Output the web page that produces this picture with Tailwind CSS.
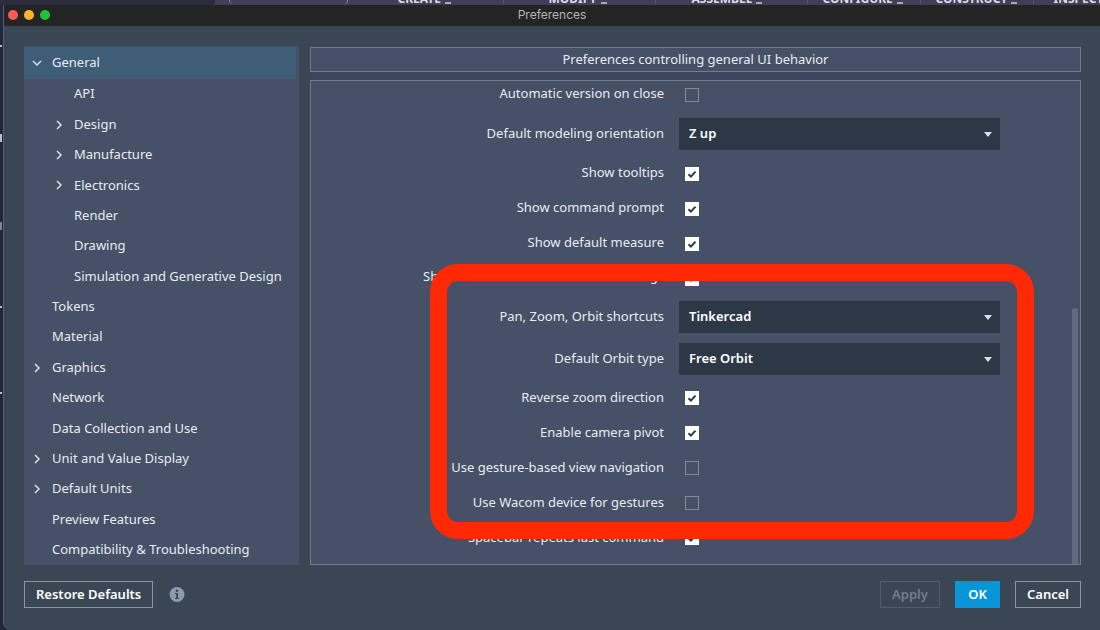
<!DOCTYPE html>
<html lang="en">
<head>
<meta charset="utf-8">
<meta name="viewport" content="width=device-width, initial-scale=1">
<title>Preferences</title>
<script src="https://cdn.jsdelivr.net/npm/@tailwindcss/browser@4"></script>
</head>
<body class="relative flex h-screen flex-col overflow-hidden bg-[#232838] font-['Noto_Sans',sans-serif] text-[13px] text-[#e6ecf5]">

<!-- application toolbar, mostly hidden behind the dialog -->
<div class="flex h-[5px] shrink-0 overflow-hidden bg-[#2d2c3f] text-xs font-bold leading-3 text-[#dcdce6]">
  <div class="w-[19.5%]"></div>
  <div class="relative h-full flex-1 whitespace-nowrap bg-[#433e57]">
    <div class="absolute -top-1 left-[14px] h-2 w-[119px] rounded-lg border-x border-[#8d8ba0]"></div>
    <span class="absolute bottom-0 left-[183px] flex items-end gap-1">CREATE <i class="mb-px h-0.5 w-1.5 bg-[#a9a7b8]"></i></span>
    <span class="absolute bottom-0 left-[334px] flex items-end gap-1">MODIFY <i class="mb-px h-0.5 w-1.5 bg-[#a9a7b8]"></i></span>
    <span class="absolute bottom-0 left-[477px] flex items-end gap-1">ASSEMBLE <i class="mb-px h-0.5 w-1.5 bg-[#a9a7b8]"></i></span>
    <span class="absolute bottom-0 left-[608px] flex items-end gap-1">CONFIGURE <i class="mb-px h-0.5 w-1.5 bg-[#a9a7b8]"></i></span>
    <span class="absolute bottom-0 left-[721px] flex items-end gap-1">CONSTRUCT <i class="mb-px h-0.5 w-1.5 bg-[#a9a7b8]"></i></span>
    <span class="absolute bottom-0 left-[839px] flex items-end gap-1">INSPECT</span>
    <i class="absolute left-[288px] top-0 h-1 w-px bg-[#5b5670]"></i>
    <i class="absolute left-[440px] top-0 h-1 w-px bg-[#5b5670]"></i>
    <i class="absolute left-[592px] top-0 h-1 w-px bg-[#5b5670]"></i>
    <i class="absolute left-[705px] top-0 h-1 w-px bg-[#5b5670]"></i>
    <i class="absolute left-[818px] top-0 h-1 w-px bg-[#5b5670]"></i>
  </div>
</div>
<!-- slivers of the application window left of the dialog -->
<i class="absolute left-0 top-[45px] h-0.5 w-0.5 bg-[#b9bfca]"></i>
<i class="absolute left-0 top-[134px] h-2 w-0.5 bg-[#b9bfca]"></i>
<i class="absolute left-0 top-[222px] h-2 w-0.5 bg-[#7c8496]"></i>
<i class="absolute left-0 top-[306px] h-0.5 w-0.5 bg-[#b9bfca]"></i>
<i class="absolute left-0 top-[392px] h-0.5 w-0.5 bg-[#b9bfca]"></i>

<main class="ml-[3px] flex min-h-0 flex-1 flex-col overflow-hidden rounded-bl-lg border-l border-[#56606e] bg-[#3b4654]">
  <header class="relative flex h-[21px] shrink-0 items-center justify-center bg-[#242424] pb-0.5">
    <div class="absolute left-1 flex gap-[6px]">
      <button aria-label="Close" class="size-[10px] rounded-full bg-[#fc5b57]"></button>
      <button aria-label="Minimize" class="size-[10px] rounded-full bg-[#fdb32b]"></button>
      <button aria-label="Zoom" class="size-[10px] rounded-full bg-[#1fc23c]"></button>
    </div>
    <h1 class="font-[Inter,sans-serif] text-[12px] leading-4 text-[#b4b4b4]">Preferences</h1>
  </header>

  <div class="flex min-h-0 flex-1 gap-[11px] pl-5 pr-[19px] pt-5">
    <nav class="flex w-[275px] shrink-0 flex-col bg-[#465066] pt-px">
      <a href="#" class="mr-[3px] flex h-8 shrink-0 items-center bg-[#3f5d77] pl-[7px]"><svg class="mr-[9px] size-3" viewBox="0 0 12 12" fill="none" stroke="#d5e2ee" stroke-width="1.5"><path d="M2 4l4 4 4-4"/></svg>General</a>
      <a href="#" class="flex flex-1 items-center pl-[50px]">API</a>
      <a href="#" class="flex flex-1 items-center pl-[29px]"><svg class="mr-[9px] size-3" viewBox="0 0 12 12" fill="none" stroke="#d5e2ee" stroke-width="1.5"><path d="M4 2l4 4-4 4"/></svg>Design</a>
      <a href="#" class="flex flex-1 items-center pl-[29px]"><svg class="mr-[9px] size-3" viewBox="0 0 12 12" fill="none" stroke="#d5e2ee" stroke-width="1.5"><path d="M4 2l4 4-4 4"/></svg>Manufacture</a>
      <a href="#" class="flex flex-1 items-center pl-[29px]"><svg class="mr-[9px] size-3" viewBox="0 0 12 12" fill="none" stroke="#d5e2ee" stroke-width="1.5"><path d="M4 2l4 4-4 4"/></svg>Electronics</a>
      <a href="#" class="flex flex-1 items-center pl-[50px]">Render</a>
      <a href="#" class="flex flex-1 items-center pl-[50px]">Drawing</a>
      <a href="#" class="flex flex-1 items-center whitespace-nowrap pl-[50px]">Simulation and Generative Design</a>
      <a href="#" class="flex flex-1 items-center pl-7">Tokens</a>
      <a href="#" class="flex flex-1 items-center pl-7">Material</a>
      <a href="#" class="flex flex-1 items-center pl-[7px]"><svg class="mr-[9px] size-3" viewBox="0 0 12 12" fill="none" stroke="#d5e2ee" stroke-width="1.5"><path d="M4 2l4 4-4 4"/></svg>Graphics</a>
      <a href="#" class="flex flex-1 items-center pl-7">Network</a>
      <a href="#" class="flex flex-1 items-center pl-7">Data Collection and Use</a>
      <a href="#" class="flex flex-1 items-center pl-[7px]"><svg class="mr-[9px] size-3" viewBox="0 0 12 12" fill="none" stroke="#d5e2ee" stroke-width="1.5"><path d="M4 2l4 4-4 4"/></svg>Unit and Value Display</a>
      <a href="#" class="flex flex-1 items-center pl-[7px]"><svg class="mr-[9px] size-3" viewBox="0 0 12 12" fill="none" stroke="#d5e2ee" stroke-width="1.5"><path d="M4 2l4 4-4 4"/></svg>Default Units</a>
      <a href="#" class="flex flex-1 items-center pl-7">Preview Features</a>
      <a href="#" class="flex flex-1 items-center pl-7">Compatibility &amp; Troubleshooting</a>
    </nav>

    <section class="flex min-w-0 flex-1 flex-col gap-2 bg-[#3b465d] pt-px">
      <h2 class="flex h-[25px] shrink-0 items-center justify-center border border-[#707b90] bg-[#465066]">Preferences controlling general UI behavior</h2>

      <form class="relative min-h-0 flex-1 overflow-hidden border border-[#707b90] bg-[#465066]">
        <div class="-mt-1 mr-[80px] flex flex-col">
          <div class="grid h-[35px] grid-cols-[353fr_321fr] items-center gap-x-[15px]">
            <label for="autover" class="pb-0.5 text-right">Automatic version on close</label>
            <span class="ml-[6px] grid size-[14px]"><input id="autover" type="checkbox" class="col-start-1 row-start-1 size-[14px] appearance-none border border-[#7f8a9f] checked:border-white checked:bg-white"></span>
          </div>
          <div class="grid h-11 grid-cols-[353fr_321fr] items-center gap-x-[15px]">
            <label for="orient" class="text-right">Default modeling orientation</label>
            <span class="grid items-center"><select id="orient" class="col-start-1 row-start-1 h-8 w-full appearance-none bg-[#2d3847] px-[10px] font-semibold text-white"><option>Z up</option></select><svg class="pointer-events-none col-start-1 row-start-1 mr-2 h-[5px] w-2 justify-self-end" viewBox="0 0 8 5" fill="#d8e0ea"><path d="M0 0h8L4 5z"/></svg></span>
          </div>
          <div class="grid h-[35px] grid-cols-[353fr_321fr] items-center gap-x-[15px]">
            <label for="tips" class="pb-0.5 text-right">Show tooltips</label>
            <span class="ml-[6px] grid size-[14px]"><input id="tips" type="checkbox" checked class="col-start-1 row-start-1 size-[14px] appearance-none border border-[#7f8a9f] checked:border-white checked:bg-white"><svg class="pointer-events-none col-start-1 row-start-1 size-[14px]" viewBox="0 0 14 14" fill="none" stroke="#2f3a49" stroke-width="2"><path d="M3.5 7.2l2.4 2.4 4.6-5"/></svg></span>
          </div>
          <div class="grid h-[35px] grid-cols-[353fr_321fr] items-center gap-x-[15px]">
            <label for="prompt" class="pb-0.5 text-right">Show command prompt</label>
            <span class="ml-[6px] grid size-[14px]"><input id="prompt" type="checkbox" checked class="col-start-1 row-start-1 size-[14px] appearance-none border border-[#7f8a9f] checked:border-white checked:bg-white"><svg class="pointer-events-none col-start-1 row-start-1 size-[14px]" viewBox="0 0 14 14" fill="none" stroke="#2f3a49" stroke-width="2"><path d="M3.5 7.2l2.4 2.4 4.6-5"/></svg></span>
          </div>
          <div class="grid h-[35px] grid-cols-[353fr_321fr] items-center gap-x-[15px]">
            <label for="measure" class="pb-0.5 text-right">Show default measure</label>
            <span class="ml-[6px] grid size-[14px]"><input id="measure" type="checkbox" checked class="col-start-1 row-start-1 size-[14px] appearance-none border border-[#7f8a9f] checked:border-white checked:bg-white"><svg class="pointer-events-none col-start-1 row-start-1 size-[14px]" viewBox="0 0 14 14" fill="none" stroke="#2f3a49" stroke-width="2"><path d="M3.5 7.2l2.4 2.4 4.6-5"/></svg></span>
          </div>
          <div class="grid h-[35px] grid-cols-[353fr_321fr] items-center gap-x-[15px]">
            <label for="warn" class="pb-1 text-right">Show in-command errors and warnings</label>
            <span class="ml-[6px] grid size-[14px]"><input id="warn" type="checkbox" checked class="col-start-1 row-start-1 size-[14px] appearance-none border border-[#7f8a9f] checked:border-white checked:bg-white"><svg class="pointer-events-none col-start-1 row-start-1 size-[14px]" viewBox="0 0 14 14" fill="none" stroke="#2f3a49" stroke-width="2"><path d="M3.5 6.2l2.4 2.4 4.6-5"/></svg></span>
          </div>
          <div class="grid h-[42px] grid-cols-[353fr_321fr] items-center gap-x-[15px]">
            <label for="pan" class="text-right">Pan, Zoom, Orbit shortcuts</label>
            <span class="grid items-center"><select id="pan" class="col-start-1 row-start-1 h-8 w-full appearance-none bg-[#2d3847] px-[10px] font-semibold text-white"><option>Tinkercad</option></select><svg class="pointer-events-none col-start-1 row-start-1 mr-2 h-[5px] w-2 justify-self-end" viewBox="0 0 8 5" fill="#d8e0ea"><path d="M0 0h8L4 5z"/></svg></span>
          </div>
          <div class="grid h-[42px] grid-cols-[353fr_321fr] items-center gap-x-[15px]">
            <label for="orbit" class="text-right">Default Orbit type</label>
            <span class="grid items-center"><select id="orbit" class="col-start-1 row-start-1 h-8 w-full appearance-none bg-[#2d3847] px-[10px] font-semibold text-white"><option>Free Orbit</option></select><svg class="pointer-events-none col-start-1 row-start-1 mr-2 h-[5px] w-2 justify-self-end" viewBox="0 0 8 5" fill="#d8e0ea"><path d="M0 0h8L4 5z"/></svg></span>
          </div>
          <div class="grid h-[35px] grid-cols-[353fr_321fr] items-center gap-x-[15px]">
            <label for="reverse" class="text-right">Reverse zoom direction</label>
            <span class="ml-[6px] grid size-[14px]"><input id="reverse" type="checkbox" checked class="col-start-1 row-start-1 size-[14px] appearance-none border border-[#7f8a9f] checked:border-white checked:bg-white"><svg class="pointer-events-none col-start-1 row-start-1 size-[14px]" viewBox="0 0 14 14" fill="none" stroke="#2f3a49" stroke-width="2"><path d="M3.5 7.2l2.4 2.4 4.6-5"/></svg></span>
          </div>
          <div class="grid h-[35px] grid-cols-[353fr_321fr] items-center gap-x-[15px]">
            <label for="pivot" class="text-right">Enable camera pivot</label>
            <span class="ml-[6px] grid size-[14px]"><input id="pivot" type="checkbox" checked class="col-start-1 row-start-1 size-[14px] appearance-none border border-[#7f8a9f] checked:border-white checked:bg-white"><svg class="pointer-events-none col-start-1 row-start-1 size-[14px]" viewBox="0 0 14 14" fill="none" stroke="#2f3a49" stroke-width="2"><path d="M3.5 7.2l2.4 2.4 4.6-5"/></svg></span>
          </div>
          <div class="grid h-[35px] grid-cols-[353fr_321fr] items-center gap-x-[15px]">
            <label for="gesture" class="text-right">Use gesture-based view navigation</label>
            <span class="ml-[6px] grid size-[14px]"><input id="gesture" type="checkbox" class="col-start-1 row-start-1 size-[14px] appearance-none border border-[#7f8a9f] checked:border-white checked:bg-white"></span>
          </div>
          <div class="grid h-[35px] grid-cols-[353fr_321fr] items-center gap-x-[15px]">
            <label for="wacom" class="text-right">Use Wacom device for gestures</label>
            <span class="ml-[6px] grid size-[14px]"><input id="wacom" type="checkbox" class="col-start-1 row-start-1 size-[14px] appearance-none border border-[#7f8a9f] checked:border-white checked:bg-white"></span>
          </div>
          <div class="grid h-[35px] grid-cols-[353fr_321fr] items-center gap-x-[15px]">
            <label for="space" class="text-right">Spacebar repeats last command</label>
            <span class="ml-[6px] grid size-[14px]"><input id="space" type="checkbox" checked class="col-start-1 row-start-1 size-[14px] appearance-none border border-[#7f8a9f] checked:border-white checked:bg-white"><svg class="pointer-events-none col-start-1 row-start-1 size-[14px]" viewBox="0 0 14 14" fill="none" stroke="#2f3a49" stroke-width="2"><path d="M3.5 7.2l2.4 2.4 4.6-5"/></svg></span>
          </div>
        </div>
        <!-- scrollbar thumb -->
        <div class="absolute bottom-0 right-[2px] top-[227px] w-[6px] rounded-t bg-[#5f6a81]"></div>
        <!-- highlight ring around the navigation settings -->
        <div class="pointer-events-none absolute left-[119px] right-[46px] top-[183px] h-[275px] rounded-[28px] border-[17px] border-[#ff2a05]"></div>
      </form>
    </section>
  </div>

  <footer class="flex shrink-0 items-center pb-[22px] pl-5 pr-[19px] pt-4 font-semibold">
    <button class="h-[27px] border border-[#8a94a3] px-[11px] text-white">Restore Defaults</button>
    <button aria-label="Information" class="ml-4"><svg class="size-4" viewBox="0 0 16 16"><circle cx="8" cy="7.5" r="7.5" fill="#8d9ab0"/><circle cx="8" cy="3.8" r="1.3" fill="#3b4654"/><path d="M6 6h3v5h1.2v1H6v-1h1.2V7H6z" fill="#3b4654"/></svg></button>
    <div class="ml-auto flex gap-[15px]">
      <button disabled class="h-[27px] w-[60px] border border-[#525d6c] text-[#727d8d]">Apply</button>
      <button class="h-[27px] w-[45px] bg-[#0696d7] text-white">OK</button>
      <button class="h-[27px] w-[66px] border border-[#8a94a3] text-white">Cancel</button>
    </div>
  </footer>
</main>
</body>
</html>
